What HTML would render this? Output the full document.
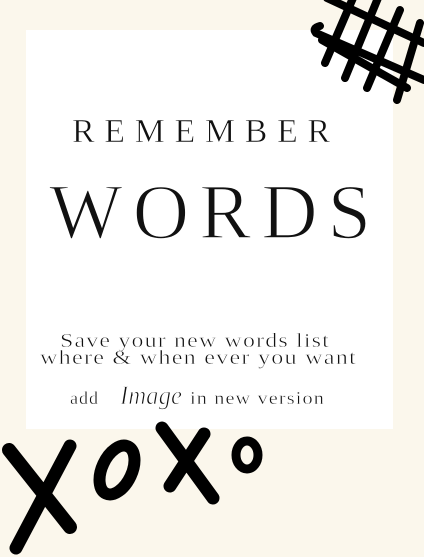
<!DOCTYPE html>
<html><head><style>
html,body{margin:0;padding:0;background:#fbf7ec;}
svg{display:block}
</style></head><body>
<svg width="424" height="557" viewBox="0 0 424 557" xmlns="http://www.w3.org/2000/svg">
<rect width="424" height="557" fill="#fbf7ec"/>
<rect x="26" y="30" width="367" height="399" fill="#ffffff"/>
<g fill="#111" font-family="Liberation Serif, serif" stroke="#fff" stroke-width="0.6">
<text x="72" y="142" font-size="34" textLength="258" lengthAdjust="spacing">REMEMBER</text>
<text x="49" y="238" font-size="78" stroke-width="1.6" textLength="322" lengthAdjust="spacing">WORDS</text>
<text x="60" y="347" font-size="20" stroke-width="0.5" letter-spacing="1" textLength="270" lengthAdjust="spacingAndGlyphs">Save your new words list</text>
<text x="40" y="364" font-size="20" stroke-width="0.5" letter-spacing="1" textLength="317" lengthAdjust="spacingAndGlyphs">where &amp; when ever you want</text>
<text x="70" y="404" font-size="18" stroke-width="0.4" letter-spacing="1">add</text>
<text x="120" y="404" font-size="26" stroke-width="0.8" font-style="italic" textLength="62" lengthAdjust="spacingAndGlyphs">Image</text>
<text x="190" y="404" font-size="18" stroke-width="0.4" letter-spacing="1" textLength="135" lengthAdjust="spacingAndGlyphs">in new version</text>
</g>
<g stroke="#000" stroke-width="8" stroke-linecap="round" fill="none">
<path d="M327 -2 L424 43"/>
<path d="M320 26 Q312 28 316 33 L424 80"/>
<path d="M322 40 L407 88"/>
<path d="M353 -2 L325 63"/>
<path d="M378 -2 L345 78"/>
<path d="M400 10 L367 88"/>
<path d="M420 23 L397 100"/>
</g>
<g stroke="#000" stroke-linecap="round" fill="none">
<path d="M9 450 L70 527" stroke-width="14"/>
<path d="M70 446 L16 548" stroke-width="13"/>
<ellipse cx="117" cy="470" rx="15" ry="26" transform="rotate(25 117 470)" stroke-width="12"/>
<path d="M162 428 L213 498" stroke-width="13"/>
<path d="M204 434 L170 486" stroke-width="13"/>
<ellipse cx="247" cy="455" rx="11" ry="14" stroke-width="9"/>
</g>
</svg>
</body></html>
